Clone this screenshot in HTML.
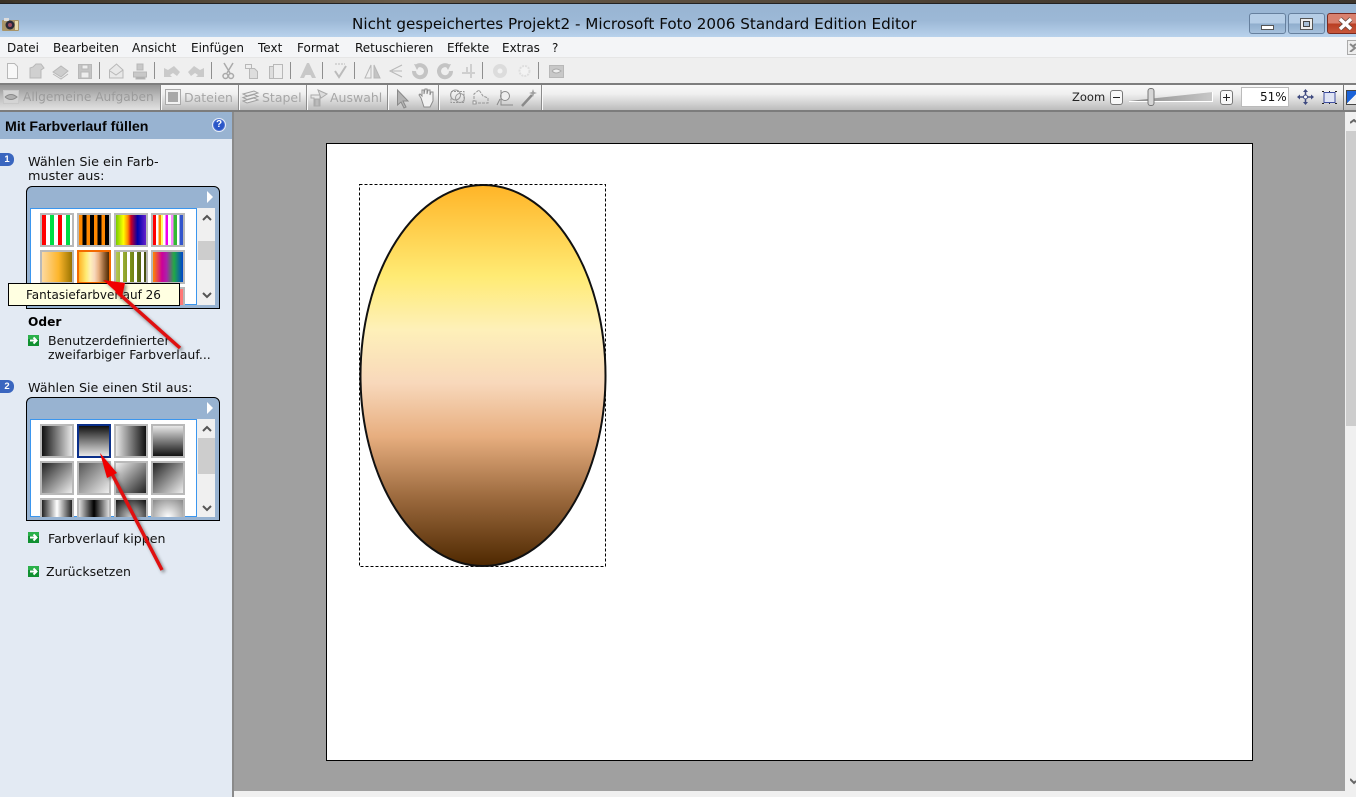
<!DOCTYPE html>
<html><head><meta charset="utf-8">
<style>
*{box-sizing:border-box}
html,body{margin:0;padding:0;width:1356px;height:797px;overflow:hidden;background:#f0f0f0;font-family:"DejaVu Sans","Liberation Sans",sans-serif}
.a{position:absolute}
.t{position:absolute;white-space:nowrap;color:#111;font-size:12.5px;line-height:14px}
.m{top:41px;font-size:12px;color:#111}
.sw{position:absolute;width:34px;height:34px;border:2px solid #b9b9b9}
.tg{position:absolute;top:90px;color:#a6a6a6;font-size:12.5px;line-height:15px;white-space:nowrap}
.sep{position:absolute;width:1px;background:#8e8e8e}
.ts{position:absolute;top:85px;height:25px;width:2px;background:linear-gradient(90deg,#8c8c8c 50%,#fafafa 50%)}
</style></head><body>
<div class="a" style="left:0;top:0;width:1356px;height:4px;background:linear-gradient(90deg,#3a3226,#6a5d4b 30%,#4a4034 70%,#3c352c);border-bottom:1px solid #222"></div>
<div class="a" style="left:0;top:4px;width:1356px;height:33px;background:linear-gradient(#98b5d3,#9cb8d6 50%,#b9d2ec)"></div>
<svg class="a" style="left:2px;top:18px" width="18" height="15" viewBox="0 0 18 15"><rect x="0" y="2" width="17" height="11" rx="1" fill="#a89468"/><rect x="2" y="0" width="5" height="3" fill="#ddd"/><circle cx="8" cy="7" r="4.500" fill="#2a2a38"/><circle cx="8" cy="7" r="2" fill="#9a4a60"/><rect x="13" y="3" width="3" height="9" fill="#e8dcae"/></svg>
<div class="t" style="left:352px;top:14px;font-size:15.200px;line-height:20px;color:#0a0a0a">Nicht gespeichertes Projekt2 - Microsoft Foto 2006 Standard Edition Editor</div>
<div class="a" style="left:1249px;top:13px;width:37px;height:21px;border:1px solid #66809e;border-radius:3px;background:linear-gradient(#b5cde6 50%,#8fadcc 50%,#a5c0dc)"></div>
<div class="a" style="left:1261px;top:25px;width:13px;height:5px;background:#fff;border:1px solid #555"></div>
<div class="a" style="left:1288px;top:13px;width:37px;height:21px;border:1px solid #66809e;border-radius:3px;background:linear-gradient(#b5cde6 50%,#8fadcc 50%,#a5c0dc)"></div>
<div class="a" style="left:1300px;top:18px;width:13px;height:12px;background:#eee;border:1px solid #555"></div>
<div class="a" style="left:1303px;top:21px;width:7px;height:6px;background:#a9bfd6;border:1px solid #444"></div>
<div class="a" style="left:1327px;top:13px;width:29px;height:21px;border:1px solid #7a2a20;border-right:0;border-radius:3px 0 0 3px;background:linear-gradient(#d9816e 50%,#b83d22 50%,#c8583c)"></div>
<svg class="a" style="left:1337px;top:17px" width="17" height="14" viewBox="0 0 17 14"><path d="M3 2l11 10M14 2L3 12" stroke="#6a4a40" stroke-width="5" fill="none"/><path d="M3 2l11 10M14 2L3 12" stroke="#fff" stroke-width="3.500" fill="none"/></svg>

<div class="a" style="left:0;top:37px;width:1356px;height:21px;background:#f4f5f7;border-bottom:1px solid #e6e6e6"></div>
<div class="t m" style="left:7px">Datei</div><div class="t m" style="left:53px">Bearbeiten</div><div class="t m" style="left:132px">Ansicht</div><div class="t m" style="left:191px">Einfügen</div><div class="t m" style="left:258px">Text</div><div class="t m" style="left:297px">Format</div><div class="t m" style="left:355px">Retuschieren</div><div class="t m" style="left:447px">Effekte</div><div class="t m" style="left:502px">Extras</div><div class="t m" style="left:552px">?</div>
<div class="a" style="left:1347px;top:40px;width:9px;height:15px;background:#eee;border:1px solid #aaa;border-right:0"></div>
<svg class="a" style="left:1349px;top:43px" width="7" height="9"><path d="M1 1l5 4-5 4M7 1L3 4" stroke="#888" stroke-width="2" fill="none"/></svg>

<div class="a" style="left:0;top:58px;width:1356px;height:25px;background:#efefef"></div>
<svg class="a" style="left:0;top:58px" width="580" height="25" viewBox="0 0 580 25" fill="#d0d0d0" stroke="#b8b8b8">
<path d="M7.500 5.500h7l3 3v12h-10z" fill="#f8f8f8"/>
<path d="M30 10l3-1 3-3h5l3 4-3 2v8H30z"/>
<path d="M53 14l8-6 7 5-7 6z" fill="#cdcdcd"/><path d="M53 16l8 5 7-5" fill="none"/>
<path d="M78.500 6.500h13v14h-13z" fill="#c4c4c4"/><rect x="82" y="7" width="6" height="4" fill="#eee"/><rect x="81" y="14" width="8" height="6" fill="#eee"/>
<path d="M109.500 12l7-6 6.500 6v8h-13.500z" fill="#e8e8e8"/><path d="M110 13l6 4 7-5" fill="none"/>
<path d="M137 6h6v6h-6zM133.500 14h13v5h-13z" fill="#c8c8c8"/><path d="M136 19h9v2h-9z" fill="#aaa"/>
<path d="M164 19v-9l4 2 6-4 6 6-3 4-4-3-3 2 2 2z" fill="#cacaca" stroke="none"/>
<path d="M204 19v-9l-4 2-6-4-6 6 3 4 4-3 3 2-2 2z" fill="#cacaca" stroke="none"/>
<path d="M224 5l6 10M233 5l-6 10" fill="none" stroke="#aaa" stroke-width="1.500"/><circle cx="225.500" cy="18" r="2.500" fill="none" stroke="#aaa" stroke-width="1.500"/><circle cx="231" cy="18" r="2.500" fill="none" stroke="#aaa" stroke-width="1.500"/>
<path d="M245.500 6.500h6v4h-6z" fill="#eee"/><path d="M249.500 10.500h5l3 3v7h-8z" fill="#ddd"/>
<path d="M269.500 8.500h11v12h-11z" fill="#ddd"/><path d="M273.500 6.500h9v14h-9z" fill="#eee"/>
<path d="M300 20l7-15h2l7 15h-4l-1.500-3h-5l-1.500 3z" fill="#c8c8c8" stroke="none"/>
<path d="M335 13l4 6 7-11" fill="none" stroke="#bbb" stroke-width="2"/><path d="M335 6h10" stroke="#bbb" stroke-dasharray="2 1"/>
<path d="M371 7v13h-6z" fill="#f0f0f0"/><path d="M374 7v13h6z" fill="#c4c4c4"/>
<path d="M402 7l-12 6 12 6" fill="none"/><path d="M392 13h10" fill="none"/>
<path d="M417 8a6 6 0 1 1-3 5" fill="none" stroke="#c4c4c4" stroke-width="4"/><path d="M414 6l6 1-3 5z" fill="#c4c4c4" stroke="none"/>
<path d="M448 8a6 6 0 1 0 3 5" fill="none" stroke="#c4c4c4" stroke-width="4"/><path d="M451 6l-6 1 3 5z" fill="#c4c4c4" stroke="none"/>
<path d="M462 15h13M471 6v14M467 9v7" fill="none" stroke="#cfcfcf" stroke-width="2"/>
<circle cx="500" cy="13" r="6.500" fill="#dcdcdc" stroke="#dcdcdc"/><circle cx="500" cy="13" r="2.500" fill="#f2f2f2" stroke="none"/>
<circle cx="524.500" cy="13" r="5" fill="#f3f3f3" stroke="#dedede" stroke-dasharray="2 1" stroke-width="2"/>
<rect x="549.500" y="7.500" width="14" height="12" fill="#c8c8c8"/><path d="M552 13q4-4 9 0q-5 4-9 0" fill="#eee" stroke="#aaa"/>
</svg>
<div class="sep" style="left:99px;top:62px;height:17px"></div><div class="sep" style="left:154px;top:62px;height:17px"></div><div class="sep" style="left:211px;top:62px;height:17px"></div><div class="sep" style="left:290px;top:62px;height:17px"></div><div class="sep" style="left:322px;top:62px;height:17px"></div><div class="sep" style="left:354px;top:62px;height:17px"></div><div class="sep" style="left:482px;top:62px;height:17px"></div><div class="sep" style="left:538px;top:62px;height:17px"></div>

<div class="a" style="left:0;top:83px;width:1356px;height:2px;background:#7e7e7e"></div>
<div class="a" style="left:0;top:85px;width:1356px;height:25px;background:linear-gradient(#f9f9f9,#f0f0f0 35%,#bcbcbc)"></div>
<div class="a" style="left:0;top:85px;width:160px;height:25px;background:linear-gradient(#949494,#bcbcbc 45%,#e2e2e2)"></div>
<div class="ts" style="left:160px"></div><div class="ts" style="left:238px"></div><div class="ts" style="left:306px"></div><div class="ts" style="left:387px"></div><div class="ts" style="left:438px"></div><div class="ts" style="left:541px"></div>
<svg class="a" style="left:0;top:85px" width="545" height="25" viewBox="0 0 545 25" fill="none" stroke="#aaa">
<rect x="3.500" y="5.500" width="15" height="13" fill="#d4d4d4" stroke="#c8c8c8"/><path d="M5 12q6-5 12 0q-6 5-12 0" fill="#b0b0b0" stroke="#8a8a8a"/>
<rect x="165.500" y="4.500" width="15" height="15" fill="#f2f2f2"/><rect x="168" y="7" width="10" height="10" fill="#a8a8a8" stroke="none"/>
<path d="M243 9l11-3 4 2-11 3zM243 12.500l11-3 4 2-11 3zM243 16l11-3 4 2-11 3z" stroke="#a0a0a0" fill="#ececec"/>
<path d="M311 10h9v11h-6v-8h-3z" fill="#e8e8e8"/><path d="M318 5l9 4-6 4z" fill="#dcdcdc"/><path d="M315 14h4v7h-4z" fill="#bbb"/>
<path d="M397.500 5v15l3.500-3 3 6 2-1-3-6h5z" fill="#b4b4b4" stroke="#8a8a8a"/>
<path d="M421 13l-2-3 1-1 2 2 0-6h2v4l1-5h2l0 5 1-4h2l0 5 1-3h2v9l-3 6h-6z" fill="#f2f2f2" stroke="#8c8c8c"/>
<circle cx="455.500" cy="10" r="5" stroke="#999"/><circle cx="460" cy="13" r="4.500" stroke="#999"/><rect x="451" y="6.500" width="13" height="11" stroke="#999" stroke-dasharray="2 1"/>
<path d="M474 18v-9l5-4 4 6 5 2v5z" stroke="#999" stroke-dasharray="3 1"/><rect x="473" y="16" width="3" height="3" fill="#eee" stroke="#999"/>
<circle cx="505" cy="11" r="4.500" stroke="#8a8a8a" fill="#eee"/><path d="M501 5v15h12M500 14l-3 6" stroke="#8a8a8a"/>
<path d="M522 21l10-11" stroke="#8a8a8a" stroke-width="2.500"/><path d="M533 4l1 3 3 1-3 1-1 3-1-3-3-1 3-1z" fill="#a0a0a0" stroke="none"/>
</svg>
<div class="tg" style="left:23px;font-size:12.200px;color:#9c9c9c">Allgemeine Aufgaben</div>
<div class="tg" style="left:184px">Dateien</div>
<div class="tg" style="left:262px">Stapel</div>
<div class="tg" style="left:330px">Auswahl</div>

<div class="t" style="left:1072px;top:90px;font-size:11.500px;color:#222">Zoom</div>
<div class="a" style="left:1110px;top:90px;width:13px;height:15px;border:1px solid #777;border-radius:3px;background:#f8f8f8"></div><div class="a" style="left:1113px;top:97px;width:7px;height:1px;background:#222"></div>
<svg class="a" style="left:1129px;top:88px" width="85" height="18" viewBox="0 0 85 18"><defs><linearGradient id="sl" x1="0" x2="1"><stop offset="0" stop-color="#888"/><stop offset="1" stop-color="#c8c8c8"/></linearGradient></defs><path d="M0 13L84 4v10H0z" fill="url(#sl)"/><path d="M0 13.500H83.500V4" fill="none" stroke="#fff"/><rect x="19" y="0.500" width="6" height="17" rx="2.500" fill="#d6d6d6" stroke="#777"/></svg>
<div class="a" style="left:1220px;top:90px;width:13px;height:15px;border:1px solid #777;border-radius:3px;background:#f8f8f8"></div><div class="a" style="left:1223px;top:97px;width:7px;height:1px;background:#222"></div><div class="a" style="left:1226px;top:94px;width:1px;height:7px;background:#222"></div>
<div class="a" style="left:1241px;top:87px;width:48px;height:20px;background:#fff;border:1px solid #bbb"></div>
<div class="t" style="left:1260px;top:90px;font-size:12px;color:#111">51%</div>
<svg class="a" style="left:1297px;top:89px" width="18" height="16" viewBox="0 0 18 16" fill="#3f4a80" stroke="#3f4a80"><path d="M1 8h15M8.500 1v14" fill="none" stroke-width="1.500"/><path d="M8.500 0l-2.500 3h5zM8.500 16l-2.500-3h5zM0 8l3-2.500v5zM17 8l-3-2.500v5z" stroke="none"/><circle cx="8.500" cy="8" r="2" fill="#fff"/></svg>
<svg class="a" style="left:1322px;top:90px" width="15" height="15"><rect x="2" y="2.500" width="11" height="10" fill="#dfe4f4" stroke="#3f4ea0"/><path d="M0 1h2v1H0zM13 1h2v1h-2zM0 13h2v1H0zM13 13h2v1h-2zM7 1h1v1H7zM7 13h1v1H7z" fill="#222"/></svg>
<div class="sep" style="left:1343px;top:85px;height:25px;background:#777"></div>
<div class="a" style="left:1346px;top:90px;width:10px;height:15px;background:linear-gradient(135deg,#1a62d8 55%,#f2f2f2 55%);border:1px solid #444;border-right:0"></div>

<div class="a" style="left:0;top:110px;width:1356px;height:2px;background:#7c7c7c"></div>
<div class="a" style="left:234px;top:112px;width:1111px;height:679px;background:#a0a0a0"></div>
<div class="a" style="left:1345px;top:112px;width:11px;height:679px;background:#f0f0f0"></div>
<div class="a" style="left:1346px;top:131px;width:10px;height:295px;background:#cdcdcd"></div>
<svg class="a" style="left:1350px;top:119px" width="6" height="7"><path d="M0 4l4-3 2 2" fill="none" stroke="#666" stroke-width="2"/></svg>
<svg class="a" style="left:1350px;top:778px" width="6" height="7"><path d="M0 1l4 4 2-2" fill="none" stroke="#666" stroke-width="2"/></svg>
<div class="a" style="left:234px;top:791px;width:1122px;height:6px;background:#f0f0f0"></div>
<div class="a" style="left:326px;top:143px;width:927px;height:618px;background:#fff;border:1px solid #000"></div>
<svg class="a" style="left:355px;top:180px" width="256" height="391" viewBox="0 0 256 391">
<defs><linearGradient id="eg" x1="0" y1="0" x2="0" y2="1">
<stop offset="0" stop-color="#ffb427"/><stop offset=".24" stop-color="#ffeb74"/><stop offset=".38" stop-color="#fef0b9"/><stop offset=".52" stop-color="#f8d8bb"/><stop offset=".66" stop-color="#e7ae7f"/><stop offset=".82" stop-color="#9c6a3e"/><stop offset="1" stop-color="#4e2800"/></linearGradient></defs>
<rect x="4.500" y="4.500" width="246" height="382" fill="none" stroke="#000" stroke-dasharray="3 2"/>
<ellipse cx="128" cy="195.500" rx="122.500" ry="190.500" fill="url(#eg)" stroke="#111" stroke-width="2"/>
</svg>

<div class="a" style="left:0;top:112px;width:232px;height:685px;background:#e3eaf3"></div>
<div class="a" style="left:232px;top:112px;width:2px;height:685px;background:#8a8a8a"></div>
<div class="a" style="left:0;top:112px;width:232px;height:27px;background:#98b3d1"></div>
<div class="t" style="left:5px;top:119px;font-family:'Liberation Sans',sans-serif;font-weight:bold;font-size:14.200px;line-height:16px;color:#050505">Mit Farbverlauf füllen</div>
<div class="a" style="left:212px;top:118px;width:14px;height:14px;border-radius:50%;background:radial-gradient(#2a56c8 55%,#cfdcf4);border:1px solid #e8eef8;color:#fff;font:bold 10px/12px 'Liberation Sans',sans-serif;text-align:center">?</div>

<div class="a" style="left:0;top:153px;width:14px;height:13px;background:#3a66bf;border-radius:0 6px 6px 0;color:#fff;font:bold 9.500px/13px 'Liberation Sans',sans-serif;text-align:center">1</div>
<div class="t" style="left:28px;top:156px;line-height:14px;font-size:12.800px">Wählen Sie ein Farb-<br>muster aus:</div>

<div class="a" style="left:26px;top:186px;width:194px;height:123px;background:#98b3d1;border:1px solid #000;border-radius:6px 6px 0 0"></div>
<div class="a" style="left:207px;top:191px;border-left:6px solid #fff;border-top:6px solid transparent;border-bottom:6px solid transparent"></div>
<div class="a" style="left:30px;top:208px;width:167px;height:97px;background:#fff;border:1px solid #3b96ee;overflow:hidden"></div>
<div class="a" style="left:197px;top:208px;width:18px;height:97px;background:#f0f0f0"></div>
<div class="a" style="left:198px;top:241px;width:17px;height:19px;background:#cdcdcd"></div>
<svg class="a" style="left:201px;top:214px" width="12" height="9"><path d="M2 6l4-4 4 4" fill="none" stroke="#555" stroke-width="2"/></svg>
<svg class="a" style="left:201px;top:292px" width="12" height="8"><path d="M2 1l4 4 4-4" fill="none" stroke="#555" stroke-width="2"/></svg>

<div class="sw" style="left:40px;top:213px;background:repeating-linear-gradient(90deg,#f00 0 4px,#fff 4px 8px,#0d4 8px 12px,#fff 12px 16px)"></div>
<div class="sw" style="left:77px;top:213px;background:repeating-linear-gradient(90deg,#f80 0 3.500px,#000 3.500px 7.500px)"></div>
<div class="sw" style="left:114px;top:213px;background:linear-gradient(90deg,#7c0,#ff0 25%,#f80 40%,#c02 50%,#00a 72%,#62c)"></div>
<div class="sw" style="left:151px;top:213px;background:linear-gradient(90deg,#f00 0 10%,#fff 10% 18%,#f80 18% 26%,#ff6 26% 34%,#fff 34% 42%,#e0e 42% 50%,#fff 50% 60%,#f8f 60% 68%,#3b3 68% 80%,#fff 80% 88%,#35c 88%)"></div>
<div class="sw" style="left:40px;top:250px;background:linear-gradient(90deg,#fdd9a0,#fdb62c 55%,#9a7400)"></div>
<div class="sw" style="left:77px;top:250px;border-color:#f36a00;background:linear-gradient(90deg,#ffb427,#ffeb74 24%,#fef0b9 38%,#f8d8bb 52%,#e7ae7f 66%,#9c6a3e 82%,#4e2800)"></div>
<div class="sw" style="left:114px;top:250px;background:repeating-linear-gradient(90deg,transparent 0 4px,#fff 4px 7px),linear-gradient(90deg,#b5c850,#7a8f18 50%,#444e10)"></div>
<div class="sw" style="left:151px;top:250px;background:linear-gradient(90deg,#f80,#c09 30%,#a2a 45%,#2a4 70%,#04c)"></div>
<div class="a" style="left:151px;top:287px;width:34px;height:18px;border:2px solid #b9b9b9;border-bottom:0;background:#f77"></div>

<div class="a" style="left:8px;top:283px;width:172px;height:23px;background:#ffffe1;border:1px solid #000"></div>
<div class="t" style="left:26px;top:288px;font-size:12px;color:#111">Fantasiefarbverlauf 26</div>

<div class="t" style="left:28px;top:315px;font-weight:bold;font-size:12.200px;color:#000">Oder</div>
<svg class="a" style="left:28px;top:335px" width="11" height="11"><rect width="11" height="11" fill="#109030"/><rect width="11" height="4" fill="#2bb04a"/><path d="M2 5.500h6M5.500 2.500l3 3-3 3" fill="none" stroke="#fff" stroke-width="2"/></svg>
<div class="t" style="left:48px;top:334px;font-size:12.500px;line-height:14px">Benutzerdefinierter<br>zweifarbiger Farbverlauf...</div>

<div class="a" style="left:0;top:380px;width:14px;height:13px;background:#3a66bf;border-radius:0 6px 6px 0;color:#fff;font:bold 9.500px/13px 'Liberation Sans',sans-serif;text-align:center">2</div>
<div class="t" style="left:28px;top:381px;font-size:12.700px">Wählen Sie einen Stil aus:</div>

<div class="a" style="left:26px;top:397px;width:194px;height:124px;background:#98b3d1;border:1px solid #000;border-radius:6px 6px 0 0"></div>
<div class="a" style="left:207px;top:402px;border-left:6px solid #fff;border-top:6px solid transparent;border-bottom:6px solid transparent"></div>
<div class="a" style="left:30px;top:419px;width:167px;height:98px;background:#fff;border:1px solid #3b96ee"></div>
<div class="a" style="left:197px;top:419px;width:18px;height:98px;background:#f0f0f0"></div>
<div class="a" style="left:198px;top:438px;width:17px;height:36px;background:#cdcdcd"></div>
<svg class="a" style="left:201px;top:425px" width="12" height="9"><path d="M2 6l4-4 4 4" fill="none" stroke="#555" stroke-width="2"/></svg>
<svg class="a" style="left:201px;top:505px" width="12" height="8"><path d="M2 1l4 4 4-4" fill="none" stroke="#555" stroke-width="2"/></svg>

<div class="sw" style="left:40px;top:424px;background:linear-gradient(90deg,#111,#e8e8e8)"></div>
<div class="sw" style="left:77px;top:424px;border-color:#0a2f8a;background:linear-gradient(#111,#e8e8e8)"></div>
<div class="sw" style="left:114px;top:424px;background:linear-gradient(90deg,#e8e8e8,#111)"></div>
<div class="sw" style="left:151px;top:424px;background:linear-gradient(#e8e8e8,#111)"></div>
<div class="sw" style="left:40px;top:461px;background:linear-gradient(135deg,#222,#eee)"></div>
<div class="sw" style="left:77px;top:461px;background:linear-gradient(135deg,#555,#eee)"></div>
<div class="sw" style="left:114px;top:461px;background:linear-gradient(135deg,#eee,#222)"></div>
<div class="sw" style="left:151px;top:461px;background:linear-gradient(315deg,#eee,#222)"></div>
<div class="sw" style="left:40px;top:498px;height:19px;border-bottom:0;background:linear-gradient(90deg,#222,#fff 50%,#222)"></div>
<div class="sw" style="left:77px;top:498px;height:19px;border-bottom:0;background:linear-gradient(90deg,#ddd,#000 50%,#ddd)"></div>
<div class="sw" style="left:114px;top:498px;height:19px;border-bottom:0;background:radial-gradient(circle at 50% 100%,#ccc,#111)"></div>
<div class="sw" style="left:151px;top:498px;height:19px;border-bottom:0;background:radial-gradient(circle at 50% 100%,#fff,#888)"></div>

<svg class="a" style="left:28px;top:532px" width="11" height="11"><rect width="11" height="11" fill="#109030"/><rect width="11" height="4" fill="#2bb04a"/><path d="M2 5.500h6M5.500 2.500l3 3-3 3" fill="none" stroke="#fff" stroke-width="2"/></svg>
<div class="t" style="left:48px;top:532px;font-size:12.600px">Farbverlauf kippen</div>
<svg class="a" style="left:28px;top:566px" width="11" height="11"><rect width="11" height="11" fill="#109030"/><rect width="11" height="4" fill="#2bb04a"/><path d="M2 5.500h6M5.500 2.500l3 3-3 3" fill="none" stroke="#fff" stroke-width="2"/></svg>
<div class="t" style="left:46px;top:565px;font-size:12.500px">Zurücksetzen</div>

<svg class="a" style="left:0;top:0" width="300" height="600" viewBox="0 0 300 600">
<defs><filter id="ds" x="-20%" y="-20%" width="140%" height="140%"><feGaussianBlur stdDeviation="1.500"/></filter></defs>
<g opacity=".55" fill="#333" stroke="#333" filter="url(#ds)" transform="translate(2,2)">
<path d="M180 348L115 291" stroke-width="3.500" fill="none"/><path d="M103 280l22 3-3 14z" stroke="none"/>
<path d="M162 570L110 470" stroke-width="3.500" fill="none"/><path d="M100 453l17 20-10 5z" stroke="none"/></g>
<path d="M180 348L116 291" stroke="#e01010" stroke-width="3.500" fill="none"/><path d="M103 280l22 3-3 14z" fill="#f00000"/>
<path d="M162 570L110 470" stroke="#e01010" stroke-width="3.500" fill="none"/><path d="M100 453l17 20-10 5z" fill="#f00000"/>
</svg>
</body></html>
